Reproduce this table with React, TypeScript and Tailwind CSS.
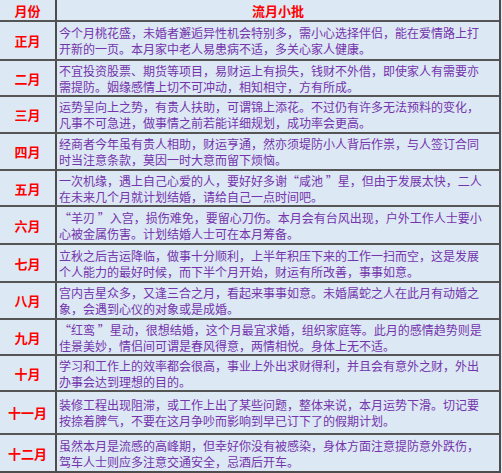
const ROWS: { month: string; h: string; lines: [string, string] }[] = [
  {
    month: "正月",
    h: "h-[39px]",
    lines: [
      "今个月桃花盛，未婚者邂逅异性机会特别多，需小心选择伴侣，能在爱情路上打",
      "开新的一页。本月家中老人易患病不适，多关心家人健康。",
    ],
  },
  {
    month: "二月",
    h: "h-[36px]",
    lines: [
      "不宜投资股票、期货等项目，易财运上有损失，钱财不外借，即使家人有需要亦",
      "需提防。姻缘感情上切不可冲动，相知相守，方有所成。",
    ],
  },
  {
    month: "三月",
    h: "h-[37px]",
    lines: [
      "运势呈向上之势，有贵人扶助，可谓锦上添花。不过仍有许多无法预料的变化，",
      "凡事不可急进，做事情之前若能详细规划，成功率会更高。",
    ],
  },
  {
    month: "四月",
    h: "h-[37px]",
    lines: [
      "经商者今年虽有贵人相助，财运亨通，然亦须堤防小人背后作祟，与人签订合同",
      "时当注意条款，莫因一时大意而留下烦恼。",
    ],
  },
  {
    month: "五月",
    h: "h-[36px]",
    lines: [
      "一次机缘，遇上自己心爱的人，要好好多谢“咸池 ”星，但由于发展太快，二人",
      "在未来几个月就计划结婚，请给自己一点时间吧。",
    ],
  },
  {
    month: "六月",
    h: "h-[38px]",
    lines: [
      "“羊刃 ”入宫，损伤难免，要留心刀伤。本月会有台风出现，户外工作人士要小",
      "心被金属伤害。计划结婚人士可在本月筹备。",
    ],
  },
  {
    month: "七月",
    h: "h-[38px]",
    lines: [
      "立秋之后吉运降临，做事十分顺利，上半年积压下来的工作一扫而空，这是发展",
      "个人能力的最好时候，而下半个月开始，财运有所改善，事事如意。",
    ],
  },
  {
    month: "八月",
    h: "h-[37px]",
    lines: [
      "宫内吉星众多，又逢三合之月，看起来事事如意。未婚属蛇之人在此月有动婚之",
      "象，会遇到心仪的对象或是成婚。",
    ],
  },
  {
    month: "九月",
    h: "h-[36px]",
    lines: [
      "“红鸾 ”星动，很想结婚，这个月最宜求婚，组织家庭等。此月的感情趋势则是",
      "佳景美妙，情侣间可谓是春风得意，两情相悦。身体上无不适。",
    ],
  },
  {
    month: "十月",
    h: "h-[36px]",
    lines: [
      "学习和工作上的效率都会很高，事业上外出求财得利，并且会有意外之财，外出",
      "办事会达到理想的目的。",
    ],
  },
  {
    month: "十一月",
    h: "h-[43px]",
    lines: [
      "装修工程出现阻滞，或工作上出了某些问题，整体来说，本月运势下滑。切记要",
      "按捺着脾气，不要在这月争吵而影响到早已订下了的假期计划。",
    ],
  },
  {
    month: "十二月",
    h: "h-[36px]",
    lines: [
      "虽然本月是流感的高峰期，但幸好你没有被感染，身体方面注意提防意外跌伤，",
      "驾车人士则应多注意交通安全，忌酒后开车。",
    ],
  },
];

export default function App() {
  return (
    <div className="h-[473px] w-[502px] bg-[#e4edf8] font-['Noto_Sans_CJK_SC',sans-serif]">
      <div className="w-[501px] border-r-2 border-b-2 border-[#4d4d4d] bg-[#dce8f4]">
        {/* header */}
        <div className="flex h-[22px] border-b-2 border-[#555]">
          <div className="flex w-[57px] items-center justify-center border-r-2 border-[#4d4d4d] text-[13px] font-bold leading-[15px] text-[#ff0000]">
            月份
          </div>
          <div className="flex flex-1 items-center justify-center text-[13px] font-bold leading-[15px] text-[#ff0000]">
            流月小批
          </div>
        </div>

        {ROWS.map((row, i) => (
          <div
            key={row.month}
            className={`flex ${row.h} ${i < ROWS.length - 1 ? "border-b-2 border-[#555]" : ""}`}
          >
            <div className="flex w-[57px] items-center justify-center border-r-2 border-[#4d4d4d] text-[13px] font-bold leading-[15px] text-[#ff0000]">
              {row.month}
            </div>
            <div className="flex flex-1 flex-col justify-center gap-[1px] pl-[2px] text-[12px] leading-[15px] text-[#7434ac]">
              <span className="whitespace-nowrap">{row.lines[0]}</span>
              <span className="whitespace-nowrap">{row.lines[1]}</span>
            </div>
          </div>
        ))}
      </div>
    </div>
  );
}
